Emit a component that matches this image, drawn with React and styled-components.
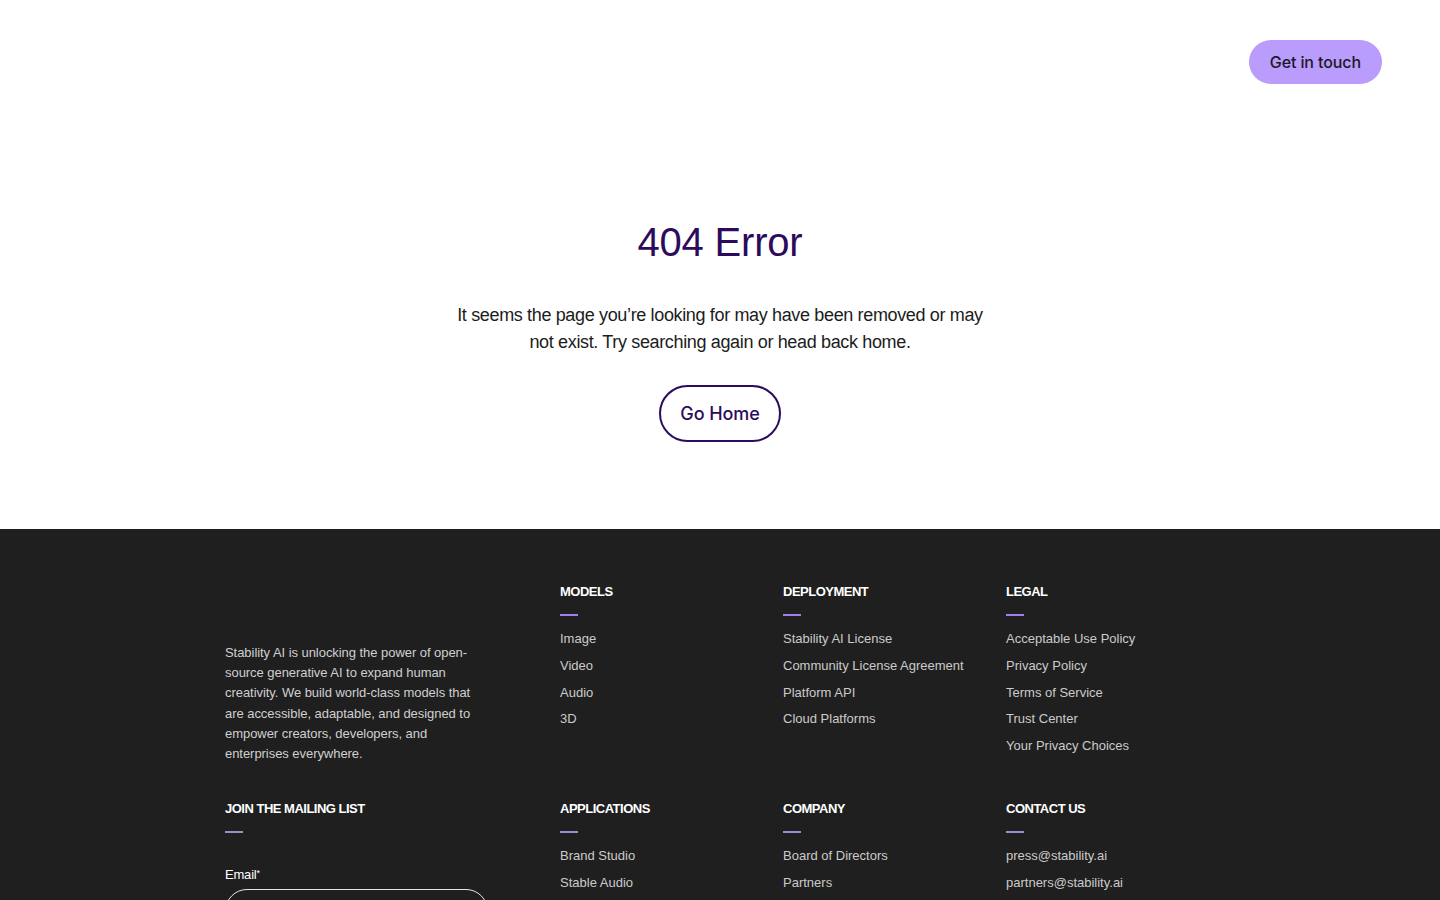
import React from "react";
import styled, { createGlobalStyle } from "styled-components";

const GlobalStyle = createGlobalStyle`
  * { box-sizing: border-box; }
  html, body { margin: 0; padding: 0; background: #ffffff; }
  body {
    font-family: "Liberation Sans", Arial, sans-serif;
    -webkit-font-smoothing: antialiased;
  }
  a { text-decoration: none; color: inherit; }
`;

const Header = styled.header`
  display: flex;
  justify-content: flex-end;
  align-items: center;
  padding: 40px 58px 40px 58px;
`;

const PillButton = styled.a`
  display: inline-flex;
  align-items: center;
  justify-content: center;
  height: ${(p) => p.$height}px;
  padding: 0 ${(p) => p.$padX}px;
  border-radius: 999px;
  font-family: Inter, "Liberation Sans", sans-serif;
  font-weight: 500;
  font-size: ${(p) => p.$size}px;
  letter-spacing: -0.1px;
  color: ${(p) => p.$color};
  background: ${(p) => p.$bg || "transparent"};
  border: ${(p) => (p.$outline ? `2px solid ${p.$color}` : "none")};
  cursor: pointer;
`;

const Main = styled.main`
  display: flex;
  flex-direction: column;
  align-items: center;
  padding: 94px 24px 87px;
  text-align: center;
`;

const Title = styled.h1`
  margin: 0;
  font-family: "Liberation Sans", Arial, sans-serif;
  font-weight: 400;
  font-size: 40px;
  line-height: 48px;
  color: #2c0b5c;
  letter-spacing: -0.2px;
`;

const Lead = styled.p`
  margin: 36px 0 29px;
  max-width: 545px;
  font-size: 18px;
  line-height: 27px;
  color: #1c1c1c;
  letter-spacing: -0.35px;
`;

const Footer = styled.footer`
  background: #1f1f1f;
  padding: 55px 0 60px;
`;

const FooterGrid = styled.div`
  width: 990px;
  margin: 0 auto;
  display: grid;
  grid-template-columns: 335px 223px 223px 1fr;
  row-gap: 37px;
`;

const Column = styled.div`
  display: flex;
  flex-direction: column;
  align-items: flex-start;
`;

const About = styled.p`
  margin: 59px 0 0;
  width: 255px;
  font-size: 13px;
  line-height: 20.2px;
  color: #cfcfcf;
  letter-spacing: -0.05px;
`;

const Heading = styled.h4`
  margin: 0;
  font-size: 13px;
  line-height: 16px;
  font-weight: 700;
  text-transform: uppercase;
  letter-spacing: -0.5px;
  color: #ffffff;
`;

const Rule = styled.span`
  display: block;
  width: 18px;
  height: 2px;
  margin-top: 14px;
  background: ${(p) => p.$tone || "#a17ff2"};
`;

const LinkList = styled.ul`
  list-style: none;
  margin: 10px 0 0;
  padding: 0;
  display: flex;
  flex-direction: column;
`;

const LinkItem = styled.li`
  font-size: 13px;
  line-height: 26.8px;
  color: #cbcbcb;
  letter-spacing: 0;
`;

const FieldLabel = styled.label`
  margin-top: 34px;
  font-size: 13px;
  line-height: 16px;
  color: #ffffff;
  letter-spacing: -0.2px;

  sup {
    font-size: 9px;
    vertical-align: top;
    line-height: 12px;
  }
`;

const EmailInput = styled.input`
  margin-top: 6px;
  width: 263px;
  height: 44px;
  border-radius: 22px;
  border: 1px solid #e6e6e6;
  background: transparent;
  padding: 0 18px;
  color: #ffffff;
  font-family: inherit;
  font-size: 13px;
  outline: none;
`;

const topGroups = [
  { title: "Models", links: ["Image", "Video", "Audio", "3D"] },
  {
    title: "Deployment",
    links: [
      "Stability AI License",
      "Community License Agreement",
      "Platform API",
      "Cloud Platforms",
    ],
  },
  {
    title: "Legal",
    links: [
      "Acceptable Use Policy",
      "Privacy Policy",
      "Terms of Service",
      "Trust Center",
      "Your Privacy Choices",
    ],
  },
];

const bottomGroups = [
  { title: "Applications", links: ["Brand Studio", "Stable Audio"] },
  { title: "Company", links: ["Board of Directors", "Partners"] },
  { title: "Contact Us", links: ["press@stability.ai", "partners@stability.ai"] },
];

function LinkGroup({ title, links, tone }) {
  return (
    <Column>
      <Heading>{title}</Heading>
      <Rule $tone={tone} />
      <LinkList>
        {links.map((l) => (
          <LinkItem key={l}>
            <a href="#">{l}</a>
          </LinkItem>
        ))}
      </LinkList>
    </Column>
  );
}

export default function App() {
  return (
    <>
      <GlobalStyle />
      <Header>
        <PillButton href="#" $height={44} $padX={21} $size={16} $bg="#b99cfb" $color="#1d1828">
          Get in touch
        </PillButton>
      </Header>

      <Main>
        <Title>404 Error</Title>
        <Lead>
          It seems the page you’re looking for may have been removed or may not exist. Try
          searching again or head back home.
        </Lead>
        <PillButton href="#" $outline $height={57} $padX={19} $size={18} $color="#2c0b5c">
          Go Home
        </PillButton>
      </Main>

      <Footer>
        <FooterGrid>
          <Column>
            <About>
              Stability AI is unlocking the power of open-source generative AI to expand human
              creativity. We build world-class models that are accessible, adaptable, and
              designed to empower creators, developers, and enterprises everywhere.
            </About>
          </Column>
          {topGroups.map((g) => (
            <LinkGroup key={g.title} {...g} />
          ))}

          <Column>
            <Heading>Join the mailing list</Heading>
            <Rule $tone="#9f8bd0" />
            <FieldLabel htmlFor="email">
              Email<sup>*</sup>
            </FieldLabel>
            <EmailInput id="email" type="email" />
          </Column>
          {bottomGroups.map((g) => (
            <LinkGroup key={g.title} {...g} tone="#9f8bd0" />
          ))}
        </FooterGrid>
      </Footer>
    </>
  );
}
